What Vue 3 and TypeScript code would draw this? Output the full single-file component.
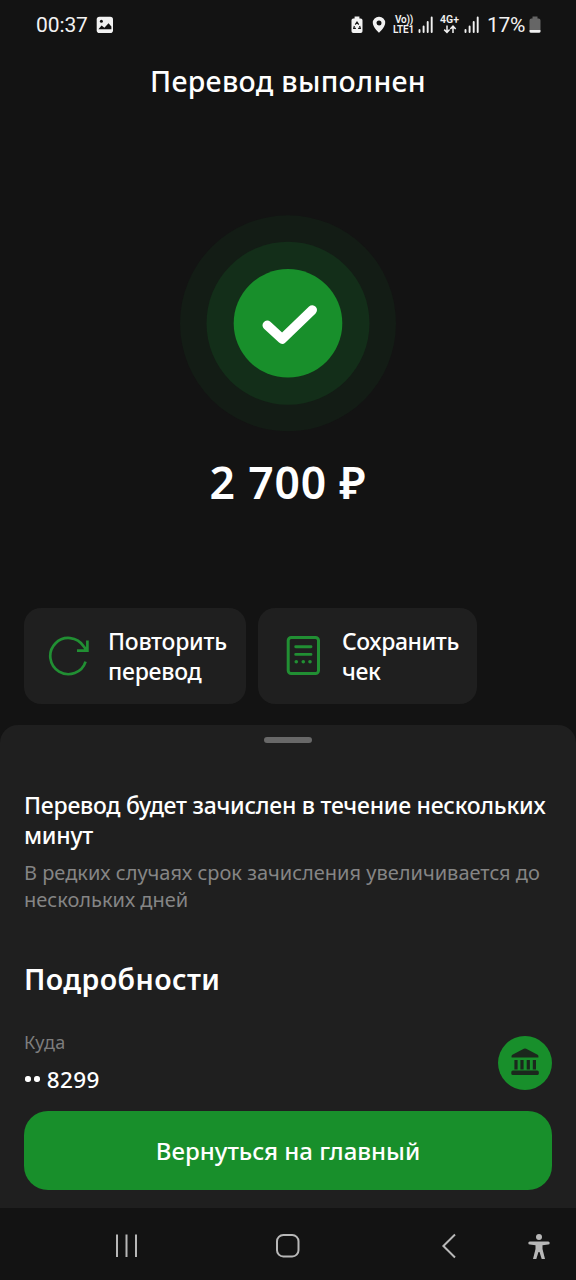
<script setup lang="ts">
interface Action {
  id: 'repeat' | 'receipt'
  lines: string[]
}

const actions: Action[] = [
  { id: 'repeat', lines: ['Повторить', 'перевод'] },
  { id: 'receipt', lines: ['Сохранить', 'чек'] },
]
</script>

<template>
  <div class="screen">
    <header class="status">
      <span class="time">00:37</span>
      <svg class="photo" width="18" height="18" viewBox="0 0 18 18">
        <rect x="0.7" y="0.7" width="16.3" height="16.3" rx="2.8" fill="#f2f2f2" />
        <circle cx="5.4" cy="5.2" r="1.5" fill="#131313" />
        <path d="M2.4 13.2 5.6 9.4 8.4 11.7 12.5 7.2 15.4 10.6V13.2Z" fill="#131313" />
      </svg>
      <span class="grow"></span>
      <svg class="saver" width="12" height="18" viewBox="0 0 12 18">
        <path d="M3.6 0.6h4.8v1.8h1.3a1.8 1.8 0 0 1 1.8 1.8v11a1.8 1.8 0 0 1-1.8 1.8H2.3A1.8 1.8 0 0 1 .5 15.2v-11a1.8 1.8 0 0 1 1.8-1.8h1.3Z" fill="#f2f2f2" />
        <path d="M4.3 8.6 6 6 7.7 8.6M8.6 10 9.3 12.4H7.1M4.9 12.4H2.7L3.4 10" fill="none" stroke="#131313" stroke-width="1.2" />
      </svg>
      <svg class="pin" width="14" height="18" viewBox="0 0 14 18">
        <path d="M7 .8A6.1 6.1 0 0 0 .8 7c0 4.1 6.2 9.8 6.2 9.8S13.2 11.1 13.2 7A6.1 6.1 0 0 0 7 .8ZM7 4.5a2.5 2.5 0 1 1 0 5 2.5 2.5 0 0 1 0-5Z" fill="#f2f2f2" fill-rule="evenodd" />
      </svg>
      <span class="volte"><b>Vo))</b><b>LTE1</b></span>
      <svg class="signal" width="16" height="18" viewBox="0 0 16 18">
        <path d="M1.5 14V16M5.6 10.5V16M9.7 6V16M13.7 1.5V16" stroke="#f2f2f2" stroke-width="1.9" stroke-linecap="round" />
      </svg>
      <span class="net">
        <b>4G+</b>
        <svg width="14" height="9" viewBox="0 0 14 9">
          <path d="M4 .5V7M1.2 4.6 4 7.4 6.6 4.6M10 8V1.5M7.3 4 10 1.2 12.7 4" fill="none" stroke="#f2f2f2" stroke-width="1.5" />
        </svg>
      </span>
      <svg class="signal" width="16" height="18" viewBox="0 0 16 18">
        <path d="M1.5 14V16M5.6 10.5V16M9.7 6V16M13.7 1.5V16" stroke="#f2f2f2" stroke-width="1.9" stroke-linecap="round" />
      </svg>
      <span class="percent">17%</span>
      <svg class="battery" width="12" height="18" viewBox="0 0 12 18">
        <path d="M3.5 .6h5v2h1a2 2 0 0 1 2 2V14H.5V4.6a2 2 0 0 1 2-2h1Z" fill="#666" />
        <path d="M.5 14h11v1.2a1.5 1.5 0 0 1-1.5 1.5H2a1.5 1.5 0 0 1-1.5-1.5Z" fill="#f2f2f2" />
      </svg>
    </header>

    <h1 class="title"><span>Перевод выполнен</span></h1>

    <div class="badge">
      <svg width="218" height="218" viewBox="0 0 218 218">
        <circle cx="109" cy="109.3" r="108" fill="#131c15" />
        <circle cx="109" cy="109.3" r="81.5" fill="#132e19" />
        <circle cx="109" cy="109.3" r="54.3" fill="#188f2b" />
        <path d="M88.2 111.3 103.2 125 133.3 96" fill="none" stroke="#fff" stroke-width="9.4" stroke-linecap="round" stroke-linejoin="round" />
      </svg>
    </div>

    <div class="amount"><span>2 700 ₽</span></div>

    <div class="actions">
      <button v-for="a in actions" :key="a.id" class="action" :class="a.id">
        <svg v-if="a.id === 'repeat'" width="42" height="42" viewBox="0 0 42 42">
          <path d="M37.6 26.2A18.1 18.1 0 1 1 35.6 10.9L38.6 14.7M39.4 5V15.3H29" transform="translate(0 0.4)" fill="none" stroke="#218f33" stroke-width="2.7" />
        </svg>
        <svg v-else width="36" height="42" viewBox="0 0 36 42">
          <rect x="3.2" y="2.4" width="30.3" height="36.2" rx="3" fill="none" stroke="#218f33" stroke-width="3" />
          <path d="M10.7 11.7H26M10.7 19.4H26" stroke="#218f33" stroke-width="2.9" stroke-linecap="round" />
          <circle cx="11.3" cy="26.7" r="1.8" fill="#218f33" />
          <circle cx="18.3" cy="26.7" r="1.8" fill="#218f33" />
          <circle cx="25" cy="26.7" r="1.8" fill="#218f33" />
        </svg>
        <span class="label"><span v-for="l in a.lines" :key="l">{{ l }}</span></span>
      </button>
    </div>

    <section class="sheet">
      <div class="handle"></div>
      <p class="lead"><span>Перевод будет зачислен в течение нескольких</span><br /><span>минут</span></p>
      <p class="note"><span>В редких случаях срок зачисления увеличивается до</span><br /><span>нескольких дней</span></p>
      <h2 class="heading"><span>Подробности</span></h2>
      <div class="row">
        <div class="dest">
          <span class="caption">Куда</span>
          <span class="value"><i></i><i></i><span>8299</span></span>
        </div>
        <svg class="bank" width="54" height="54" viewBox="0 0 54 54">
          <circle cx="27" cy="27" r="27" fill="#188f2b" />
          <path d="M25.8 12.7q1.2-.6 2.4 0L39.6 18.8q.8.5.8 1.4v1.3H13.600v-1.3q0-.9.8-1.4Z" fill="#1b281d" />
          <path d="M18 24v9.4M24 24v9.4M30.3 24v9.4M36.4 24v9.4" stroke="#1b281d" stroke-width="3.2" />
          <rect x="13.3" y="34.5" width="27.5" height="4.6" rx="1.6" fill="#1b281d" />
        </svg>
      </div>
      <button class="primary"><span>Вернуться на главный</span></button>
    </section>

    <nav class="nav">
      <svg class="recents" width="24" height="26" viewBox="0 0 24 26">
        <path d="M2 1.5V24M11.5 1.5V24M21 1.5V24" stroke="#b8b8b8" stroke-width="2" />
      </svg>
      <svg class="home" width="26" height="26" viewBox="0 0 26 26">
        <rect x="2" y="2" width="21.5" height="21.5" rx="6.3" fill="none" stroke="#b8b8b8" stroke-width="2" />
      </svg>
      <svg class="back" width="16" height="26" viewBox="0 0 16 26">
        <path d="M14 1.500 2.4 13 14 24.5" fill="none" stroke="#b8b8b8" stroke-width="2" />
      </svg>
      <svg class="access" width="22" height="28" viewBox="0 0 22 28">
        <circle cx="11" cy="4" r="3" fill="#b8b8b8" />
        <path d="M1.8 8.5H20.2a1.3 1.3 0 0 1 0 3L14.5 12.3V16L17 26H13.7L11.5 19H10.5L8.3 26H5L7.5 16V12.3L1.8 11.5a1.3 1.3 0 0 1 0-3Z" fill="#b8b8b8" />
      </svg>
    </nav>
  </div>
</template>

<style>
body {
  background: #131313;
}
</style>

<style scoped>
* {
  box-sizing: border-box;
}
.screen {
  width: 576px;
  height: 1280px;
  display: flex;
  flex-direction: column;
  background: #131313;
  color: #fff;
  font-family: 'Noto Sans', 'Open Sans', sans-serif;
  overflow: hidden;
  white-space: nowrap;
}
svg {
  display: block;
  flex: none;
}
h1, h2, p {
  margin: 0;
}
button {
  border: 0;
  font: inherit;
  color: inherit;
  padding: 0;
}
.status {
  height: 49px;
  display: flex;
  align-items: center;
  padding: 0 35px 0 36px;
  font-family: Roboto, sans-serif;
  color: #f2f2f2;
}
.time {
  width: 60px;
  font-size: 21px;
  letter-spacing: -0.1px;
}
.grow { flex: 1; }
.saver { margin-right: 9px; }
.pin { margin-right: 7px; }
.volte, .net {
  display: flex;
  flex: none;
  flex-direction: column;
  line-height: 9.5px;
}
.volte {
  width: 25px;
  font-size: 10px;
  align-items: flex-start;
  letter-spacing: -0.2px;
}
.volte b:first-child {
  padding-left: 2px;
}
.volte b, .net b { font-weight: 600; }
.signal { margin-right: 6px; }
.net {
  width: 19px;
  font-size: 10.5px;
  align-items: center;
  margin-right: 5px;
}
.percent {
  width: 42px;
  margin-left: 1px;
  font-size: 21px;
  letter-spacing: -0.3px;
}
.title {
  height: 64px;
  line-height: 64px;
  text-align: center;
  font-size: 28.5px;
  font-weight: 500;
  letter-spacing: 0.3px;
}
.badge {
  margin-top: 101px;
  display: flex;
  justify-content: center;
}
.amount {
  margin-top: 17px;
  height: 66px;
  line-height: 66px;
  text-align: center;
  font-size: 44.5px;
  font-weight: 600;
  letter-spacing: 0.8px;
}
.actions {
  margin-top: 93px;
  padding-left: 24px;
  display: flex;
  gap: 12px;
}
.action {
  height: 96px;
  border-radius: 17px;
  background: #1f1f1f;
  display: flex;
  align-items: center;
  text-align: left;
}
.repeat {
  width: 222px;
  padding-left: 24px;
  gap: 18px;
}
.receipt {
  width: 219px;
  padding-left: 27px;
  gap: 21px;
}
.label {
  display: flex;
  flex-direction: column;
  align-items: flex-start;
  font-size: 23px;
  line-height: 30px;
  font-weight: 500;
  letter-spacing: -0.25px;
}
.receipt .label { letter-spacing: -0.4px; }
.sheet {
  margin-top: 21px;
  height: 483px;
  border-radius: 18px 18px 0 0;
  background: #1f1f1f;
  padding: 12px 24px 0;
  display: flex;
  flex-direction: column;
}
.handle {
  width: 48px;
  height: 6px;
  border-radius: 3px;
  background: #686868;
  align-self: center;
}
.lead {
  margin-top: 47px;
  font-size: 23px;
  line-height: 30px;
  font-weight: 500;
  letter-spacing: -0.25px;
}
.note {
  margin-top: 9px;
  font-size: 20px;
  line-height: 27px;
  color: #858585;
}
.heading {
  margin-top: 46px;
  height: 40px;
  line-height: 40px;
  font-size: 28.5px;
  font-weight: 600;
  letter-spacing: 0.4px;
}
.row {
  margin-top: 30px;
  height: 61px;
  display: flex;
  justify-content: space-between;
}
.bank { margin-top: 7px; }
.dest {
  display: flex;
  flex-direction: column;
}
.caption {
  height: 27px;
  line-height: 27px;
  font-size: 18px;
  letter-spacing: 0.3px;
  color: #7d7d7d;
}
.value {
  margin-top: 8px;
  height: 30px;
  flex: none;
  display: flex;
  align-items: center;
  font-size: 22.5px;
  font-weight: 500;
  letter-spacing: 0.4px;
}
.value i {
  width: 5.4px;
  height: 5.4px;
  border-radius: 50%;
  background: #fff;
  margin: 0 2.1px 0 1.4px;
}
.value span { margin-left: 5px; }
.primary {
  margin-top: 21px;
  height: 79px;
  flex: none;
  border-radius: 24px;
  background: #188f2b;
  font-size: 24px;
  font-weight: 500;
}
.nav {
  height: 72px;
  display: flex;
  align-items: center;
  padding: 3px 0 0 115px;
}
.home { margin-left: 136px; }
.back { margin-left: 140px; }
.access {
  margin-left: 71px;
  margin-top: 2px;
}
</style>
